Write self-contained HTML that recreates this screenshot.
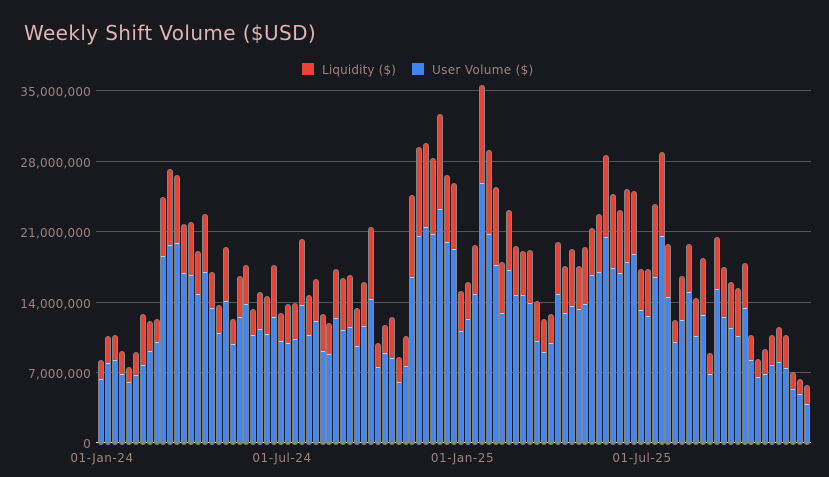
<!DOCTYPE html>
<html><head><meta charset="utf-8"><style>
html,body{margin:0;padding:0;background:#17191e;width:829px;height:477px;overflow:hidden}
svg{display:block}
text{font-family:"DejaVu Sans",sans-serif}
.t{font-size:12px;fill:#9c8282}
.y{letter-spacing:.2px}
.x{letter-spacing:.55px}
</style></head><body>
<svg width="829" height="477" viewBox="0 0 829 477">
<rect width="829" height="477" fill="#17191e"/>
<text x="24" y="40" fill="#e0b2b2" style="font-size:20px;letter-spacing:.38px">Weekly Shift Volume ($USD)</text>
<rect x="302" y="63" width="12" height="12" fill="#ea4335"/>
<text class="t" x="322" y="74" style="letter-spacing:.15px">Liquidity ($)</text>
<rect x="412" y="63" width="12" height="12" fill="#3f83f8"/>
<text class="t" x="432" y="74" style="letter-spacing:.33px">User Volume ($)</text>
<g fill="none" stroke="#56565a" stroke-width="1">
<path d="M96 90.5H811M96 161.5H811M96 231.5H811M96 302.5H811M96 372.5H811"/>
</g>
<path d="M96 442.5H811" stroke="#e8e8e8" stroke-width="1"/>
<g text-anchor="end">
<text class="t y" x="91" y="96">35,000,000</text>
<text class="t y" x="91" y="167">28,000,000</text>
<text class="t y" x="91" y="237">21,000,000</text>
<text class="t y" x="91" y="308">14,000,000</text>
<text class="t y" x="91" y="378">7,000,000</text>
<text class="t y" x="91" y="448">0</text>
</g>
<g text-anchor="middle">
<text class="t x" x="102" y="462">01-Jan-24</text>
<text class="t x" x="282" y="462">01-Jul-24</text>
<text class="t x" x="462.5" y="462">01-Jan-25</text>
<text class="t x" x="642" y="462">01-Jul-25</text>
</g>
<g fill="none">
<path stroke="#858585" stroke-width="6" stroke-linecap="round" d="M101 363V442M108 339V442M115 338V442M122 354V442M129 370V442M136 355V442M143 317V442M150 324V442M157 322V442M163 200V442M170 172V442M177 178V442M184 227V442M191 225V442M198 254V442M205 217V442M212 275V442M219 308V442M226 250V442M233 322V442M240 279V442M246 268V442M253 312V442M260 295V442M267 299V442M274 268V442M281 316V442M288 307V442M295 306V442M302 242V442M309 298V442M316 282V442M323 317V442M329 326V442M336 272V442M343 281V442M350 278V442M357 311V442M364 285V442M371 230V442M378 346V442M385 328V442M392 320V442M399 360V442M406 339V442M412 198V442M419 150V442M426 146V442M433 161V442M440 117V442M447 178V442M454 186V442M461 294V442M468 285V442M475 248V442M482 88V442M489 153V442M496 190V442M502 265V442M509 213V442M516 249V442M523 254V442M530 253V442M537 304V442M544 322V442M551 317V442M558 245V442M565 269V442M572 252V442M579 269V442M585 250V442M592 231V442M599 217V442M606 158V442M613 197V442M620 213V442M627 192V442M634 194V442M641 272V442M648 272V442M655 207V442M662 155V442M668 247V442M675 323V442M682 279V442M689 247V442M696 301V442M703 261V442M710 356V442M717 240V442M724 270V442M731 285V442M738 291V442M745 266V442M751 338V442M758 362V442M765 352V442M772 338V442M779 330V442M786 338V442M793 375V442M800 382V442M807 388V442"/>
<path stroke="#ea4335" stroke-width="4" stroke-linecap="round" d="M101 363V379M108 339V363M115 338V360M122 354V374M129 370V382M136 355V375M143 317V365M150 324V351M157 322V342M163 200V256M170 172V245M177 178V243M184 227V273M191 225V275M198 254V294M205 217V272M212 275V308M219 308V333M226 250V301M233 322V344M240 279V317M246 268V304M253 312V335M260 295V329M267 299V334M274 268V317M281 316V341M288 307V343M295 306V339M302 242V305M309 298V335M316 282V321M323 317V351M329 326V354M336 272V318M343 281V330M350 278V327M357 311V346M364 285V326M371 230V299M378 346V367M385 328V353M392 320V358M399 360V382M406 339V366M412 198V277M419 150V236M426 146V227M433 161V234M440 117V209M447 178V242M454 186V249M461 294V331M468 285V319M475 248V294M482 88V183M489 153V234M496 190V265M502 265V313M509 213V270M516 249V295M523 254V295M530 253V303M537 304V341M544 322V352M551 317V343M558 245V294M565 269V313M572 252V306M579 269V309M585 250V304M592 231V275M599 217V272M606 158V237M613 197V268M620 213V273M627 192V262M634 194V254M641 272V310M648 272V316M655 207V277M662 155V236M668 247V297M675 323V342M682 279V320M689 247V292M696 301V336M703 261V315M710 356V374M717 240V289M724 270V317M731 285V328M738 291V336M745 266V308M751 338V360M758 362V377M765 352V374M772 338V365M779 330V362M786 338V368M793 375V389M800 382V394M807 388V404"/>
<path stroke="#4285f4" stroke-width="4" d="M101 379V442M108 363V442M115 360V442M122 374V442M129 382V442M136 375V442M143 365V442M150 351V442M157 342V442M163 256V442M170 245V442M177 243V442M184 273V442M191 275V442M198 294V442M205 272V442M212 308V442M219 333V442M226 301V442M233 344V442M240 317V442M246 304V442M253 335V442M260 329V442M267 334V442M274 317V442M281 341V442M288 343V442M295 339V442M302 305V442M309 335V442M316 321V442M323 351V442M329 354V442M336 318V442M343 330V442M350 327V442M357 346V442M364 326V442M371 299V442M378 367V442M385 353V442M392 358V442M399 382V442M406 366V442M412 277V442M419 236V442M426 227V442M433 234V442M440 209V442M447 242V442M454 249V442M461 331V442M468 319V442M475 294V442M482 183V442M489 234V442M496 265V442M502 313V442M509 270V442M516 295V442M523 295V442M530 303V442M537 341V442M544 352V442M551 343V442M558 294V442M565 313V442M572 306V442M579 309V442M585 304V442M592 275V442M599 272V442M606 237V442M613 268V442M620 273V442M627 262V442M634 254V442M641 310V442M648 316V442M655 277V442M662 236V442M668 297V442M675 342V442M682 320V442M689 292V442M696 336V442M703 315V442M710 374V442M717 289V442M724 317V442M731 328V442M738 336V442M745 308V442M751 360V442M758 377V442M765 374V442M772 365V442M779 362V442M786 368V442M793 389V442M800 394V442M807 404V442"/>
<path stroke="#b3cffb" stroke-width="1" d="M99 379.5h4M106 363.5h4M113 360.5h4M120 374.5h4M127 382.5h4M134 375.5h4M141 365.5h4M148 351.5h4M155 342.5h4M161 256.5h4M168 245.5h4M175 243.5h4M182 273.5h4M189 275.5h4M196 294.5h4M203 272.5h4M210 308.5h4M217 333.5h4M224 301.5h4M231 344.5h4M238 317.5h4M244 304.5h4M251 335.5h4M258 329.5h4M265 334.5h4M272 317.5h4M279 341.5h4M286 343.5h4M293 339.5h4M300 305.5h4M307 335.5h4M314 321.5h4M321 351.5h4M327 354.5h4M334 318.5h4M341 330.5h4M348 327.5h4M355 346.5h4M362 326.5h4M369 299.5h4M376 367.5h4M383 353.5h4M390 358.5h4M397 382.5h4M404 366.5h4M410 277.5h4M417 236.5h4M424 227.5h4M431 234.5h4M438 209.5h4M445 242.5h4M452 249.5h4M459 331.5h4M466 319.5h4M473 294.5h4M480 183.5h4M487 234.5h4M494 265.5h4M500 313.5h4M507 270.5h4M514 295.5h4M521 295.5h4M528 303.5h4M535 341.5h4M542 352.5h4M549 343.5h4M556 294.5h4M563 313.5h4M570 306.5h4M577 309.5h4M583 304.5h4M590 275.5h4M597 272.5h4M604 237.5h4M611 268.5h4M618 273.5h4M625 262.5h4M632 254.5h4M639 310.5h4M646 316.5h4M653 277.5h4M660 236.5h4M666 297.5h4M673 342.5h4M680 320.5h4M687 292.5h4M694 336.5h4M701 315.5h4M708 374.5h4M715 289.5h4M722 317.5h4M729 328.5h4M736 336.5h4M743 308.5h4M749 360.5h4M756 377.5h4M763 374.5h4M770 365.5h4M777 362.5h4M784 368.5h4M791 389.5h4M798 394.5h4M805 404.5h4"/>
</g>
</svg>
</body></html>
